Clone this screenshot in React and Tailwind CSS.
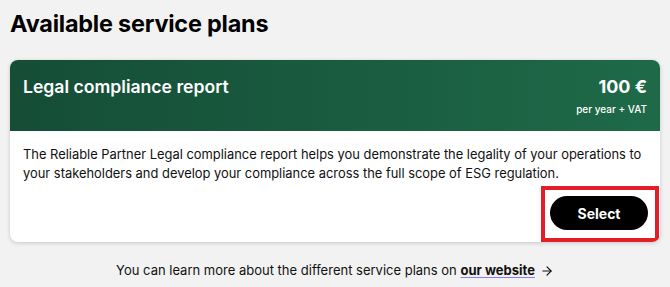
import { ArrowRight } from 'lucide-react';

export default function App() {
  return (
    <div className="min-h-screen w-full bg-[#f2f2f2] px-[10px] pt-[6px] font-['Inter',sans-serif] text-black">
      <h1 className="text-[23.4px] font-bold leading-[36px] tracking-[-0.2px]">Available service plans</h1>

      <div className="mt-[18px] overflow-hidden rounded-lg bg-white shadow-[0_1px_4px_rgba(0,0,0,0.18)]">
        <div className="flex h-[71px] items-start justify-between bg-gradient-to-r from-[#154d37] to-[#1e6a48] px-[13px] pt-[14px] text-white">
          <h2 className="text-[17.6px] font-semibold leading-[26px]">Legal compliance report</h2>
          <div className="flex flex-col items-end">
            <span className="text-[18px] font-bold leading-[26px]">100 €</span>
            <span className="mt-[3px] text-[10px] font-medium leading-[12px]">per year + VAT</span>
          </div>
        </div>
        <div className="flex h-[111px] flex-col justify-between pl-[13px] pt-[14px]">
          <p className="pr-[8px] text-[12.9px] leading-[19px] text-[#111]">
            The Reliable Partner Legal compliance report helps you demonstrate the legality of your operations to your stakeholders and develop your compliance across the full scope of ESG regulation.
          </p>
          <div className="flex justify-end pr-px">
            <div className="border-4 border-[#e41e26] pb-[8px] pl-[5px] pr-[7px] pt-[6px]">
              <button className="h-[34px] w-[98px] rounded-full bg-black text-[14px] font-bold text-white">Select</button>
            </div>
          </div>
        </div>
      </div>

      <p className="mt-[19px] flex items-center justify-center gap-[5px] text-[13px] text-[#111]">
        <span>
          You can learn more about the different service plans on{' '}
          <a href="#" className="font-bold underline decoration-[#8b7cf6] underline-offset-2">our website</a>
        </span>
        <ArrowRight className="h-[14px] w-[14px]" strokeWidth={2} />
      </p>
    </div>
  );
}
